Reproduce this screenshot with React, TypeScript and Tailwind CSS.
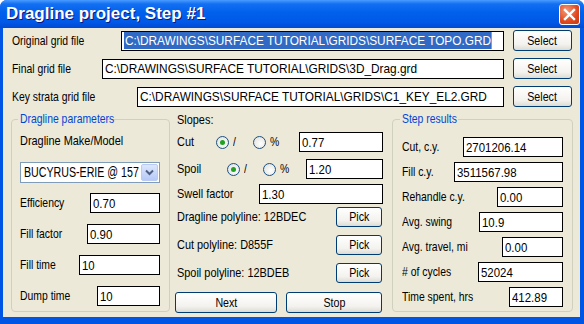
import React from "react";

// reference text is a narrow face; squeeze Liberation Sans to match
const T = ({ children, c = "scale-x-[0.8]" }: { children: React.ReactNode; c?: string }) => (
  <span className={`inline-block origin-left whitespace-nowrap ${c}`}>{children}</span>
);

const Box = ({ w, children, hi, s = "scale-x-[0.88]" }: { w: string; children: React.ReactNode; hi?: boolean; s?: string }) => (
  <div className={`${w} h-[20px] shrink-0 border border-black bg-white pl-[2px] flex items-center text-[13px] leading-none whitespace-nowrap overflow-hidden`}>
    <span className={`inline-block origin-left whitespace-nowrap ${s} ${hi ? "bg-[#316AC5] text-white px-[1px] py-[2px]" : ""}`}>
      {children}
    </span>
  </div>
);

const Btn = ({ w, h = "h-[21px]", children }: { w: string; h?: string; children: React.ReactNode }) => (
  <div className={`${w} ${h} shrink-0 rounded-[3px] border border-[#003C74] bg-[linear-gradient(to_bottom,#ffffff,#f3f2ee_70%,#dcdbd3)] flex items-center justify-center text-[13px] text-black`}>
    <span className="inline-block scale-x-[0.82] whitespace-nowrap">{children}</span>
  </div>
);

const Radio = ({ on }: { on?: boolean }) => (
  <div className="w-[13px] h-[13px] shrink-0 rounded-full border border-[#1C5180] bg-[radial-gradient(circle_at_60%_60%,#ffffff,#dcdcd6)] flex items-center justify-center">
    {on && <div className="w-[5px] h-[5px] rounded-full bg-[#21A121]" />}
  </div>
);

const fileRows = [
  { label: "Original grid file", lw: "w-[109px]", iw: "w-[383px]", path: "C:\\DRAWINGS\\SURFACE TUTORIAL\\GRIDS\\SURFACE TOPO.GRD", hi: true },
  { label: "Final grid file", lw: "w-[90px]", iw: "w-[402px]", path: "C:\\DRAWINGS\\SURFACE TUTORIAL\\GRIDS\\3D_Drag.grd" },
  { label: "Key strata grid file", lw: "w-[125px]", iw: "w-[367px]", path: "C:\\DRAWINGS\\SURFACE TUTORIAL\\GRIDS\\C1_KEY_EL2.GRD" },
];

const params = [
  { label: "Efficiency", w: "w-[70px]", v: "0.70" },
  { label: "Fill factor", w: "w-[73px]", v: "0.90" },
  { label: "Fill time", w: "w-[81px]", v: "10" },
  { label: "Dump time", w: "w-[63px]", v: "10" },
];

const results = [
  { label: "Cut, c.y.", w: "w-[100px]", v: "2701206.14" },
  { label: "Fill c.y.", w: "w-[109px]", v: "3511567.98" },
  { label: "Rehandle c.y.", w: "w-[66px]", v: "0.00" },
  { label: "Avg. swing", w: "w-[84px]", v: "10.9" },
  { label: "Avg. travel, mi", w: "w-[61px]", v: "0.00" },
  { label: "# of cycles", w: "w-[85px]", v: "52024" },
  { label: "Time spent, hrs", w: "w-[54px]", v: "412.89" },
];

const polylines = ["Dragline polyline: 12BDEC", "Cut polyline: D855F", "Spoil polyline: 12BDEB"];

const mid = "scale-x-[0.84]";

export default function App() {
  return (
    <div className="w-[584px] h-[324px] flex flex-col rounded-t-[7px] overflow-hidden bg-[#0055E5] font-['Liberation_Sans',Arial,sans-serif] text-[13px] text-black">
      {/* title bar */}
      <div className="h-[28px] shrink-0 flex items-center justify-between pl-[6px] pr-[4px] bg-[linear-gradient(to_bottom,#4A9CFF_0%,#1470F2_14%,#0060EC_45%,#0058E6_80%,#004AD2_100%)]">
        <span className="text-white font-bold text-[17px] [text-shadow:1px_1px_0_#0A1883]">
          Dragline project, Step #1
        </span>
        <div className="w-[21px] h-[21px] rounded-[3px] border border-white bg-[radial-gradient(circle_at_35%_30%,#F29B78,#E0481E_60%,#C23A12)] flex items-center justify-center">
          <svg width="13" height="13" viewBox="0 0 13 13">
            <path d="M2 2 L11 11 M11 2 L2 11" stroke="white" strokeWidth="2.4" strokeLinecap="square" />
          </svg>
        </div>
      </div>

      {/* body */}
      <div className="h-[289px] ml-[3px] mr-[4px] bg-[#ECE9D8] flex flex-col">
        <div className="flex flex-col gap-[7px] pt-[2px] pl-[9px]">
          {fileRows.map((r) => (
            <div key={r.label} className="h-[21px] flex items-center">
              <span className={`${r.lw} shrink-0`}>
                <T>{r.label}</T>
              </span>
              <Box w={r.iw} hi={r.hi} s="scale-x-[0.91]">{r.path}</Box>
              <div className="ml-[9px]">
                <Btn w="w-[59px]">Select</Btn>
              </div>
            </div>
          ))}
        </div>

        <div className="flex mt-[5px] pl-[8px]">
          {/* Dragline parameters */}
          <fieldset className="w-[159px] h-[200px] border border-[#D0D0BF] rounded-[4px] pl-[8px] pr-[9px]">
            <legend className="ml-[-2px] px-[2px] text-[#0046D5] leading-[14px] w-[88px]">
              <T>Dragline parameters</T>
            </legend>
            <div className="mt-[7px] h-[16px] flex items-center">
              <T c="scale-x-[0.84]">Dragline Make/Model</T>
            </div>
            <div className="mt-[13px] w-[140px] h-[21px] border border-[#7F9DB9] bg-white flex items-center overflow-hidden">
              <span className="flex-1 pl-[3px] whitespace-nowrap overflow-hidden text-[14px]">
                <span className="inline-block origin-left scale-x-[0.76]">BUCYRUS-ERIE @ 157</span>
              </span>
              <div className="w-[17px] h-[17px] mr-[1px] shrink-0 rounded-[2px] bg-[linear-gradient(to_bottom,#DCE6FD,#B6CAF7)] border border-[#B9CBF3] flex items-center justify-center">
                <svg width="9" height="7" viewBox="0 0 9 7">
                  <path d="M1 1.5 L4.5 5 L8 1.5" stroke="#4D6185" strokeWidth="2" fill="none" />
                </svg>
              </div>
            </div>
            <div className="flex flex-col gap-[11px] mt-[10px]">
              {params.map((p) => (
                <div key={p.label} className="h-[20px] flex items-center justify-between">
                  <T>{p.label}</T>
                  <Box w={p.w}>{p.v}</Box>
                </div>
              ))}
            </div>
          </fieldset>

          {/* Slopes column */}
          <div className="w-[208px] ml-[5px] flex flex-col">
            <div className="h-[16px] flex items-center pl-[2px]">
              <T c={mid}>Slopes:</T>
            </div>
            <div className="mt-[4px] h-[20px] flex items-center pl-[2px]">
              <span className="w-[39px] shrink-0">
                <T c={mid}>Cut</T>
              </span>
              <Radio on />
              <span className="w-[24px] shrink-0 pl-[4px]">
                <T>/</T>
              </span>
              <Radio />
              <span className="pl-[4px]">
                <T>%</T>
              </span>
              <div className="ml-auto">
                <Box w="w-[84px]">0.77</Box>
              </div>
            </div>
            <div className="mt-[7px] h-[20px] flex items-center pl-[2px]">
              <span className="w-[50px] shrink-0">
                <T c={mid}>Spoil</T>
              </span>
              <Radio on />
              <span className="w-[23px] shrink-0 pl-[4px]">
                <T>/</T>
              </span>
              <Radio />
              <span className="pl-[4px]">
                <T>%</T>
              </span>
              <div className="ml-auto">
                <Box w="w-[77px]">1.20</Box>
              </div>
            </div>
            <div className="mt-[5px] h-[20px] flex items-center justify-between pl-[2px]">
              <T c={mid}>Swell factor</T>
              <Box w="w-[124px]">1.30</Box>
            </div>
            <div className="flex flex-col gap-[8px] mt-[3px]">
              {polylines.map((p) => (
                <div key={p} className="h-[20px] flex items-center justify-between pl-[2px]">
                  <T c={mid}>{p}</T>
                  <div className="mr-[1px]">
                    <Btn w="w-[46px]" h="h-[20px]">Pick</Btn>
                  </div>
                </div>
              ))}
            </div>
            <div className="mt-[9px] flex justify-between pr-[1px]">
              <Btn w="w-[102px]">Next</Btn>
              <Btn w="w-[96px]">Stop</Btn>
            </div>
          </div>

          {/* Step results */}
          <fieldset className="w-[181px] h-[200px] ml-[9px] border border-[#D0D0BF] rounded-[4px] pl-[9px] pr-[9px]">
            <legend className="ml-[-2px] px-[2px] text-[#0046D5] leading-[14px] w-[58px]">
              <T>Step results</T>
            </legend>
            <div className="flex flex-col gap-[6px] mt-[11px]">
              {results.map((r) => (
                <div key={r.label} className="h-[19px] flex items-center justify-between">
                  <T>{r.label}</T>
                  <div className="h-[19px] flex">
                    <Box w={r.w}>{r.v}</Box>
                  </div>
                </div>
              ))}
            </div>
          </fieldset>
        </div>
      </div>
    </div>
  );
}
